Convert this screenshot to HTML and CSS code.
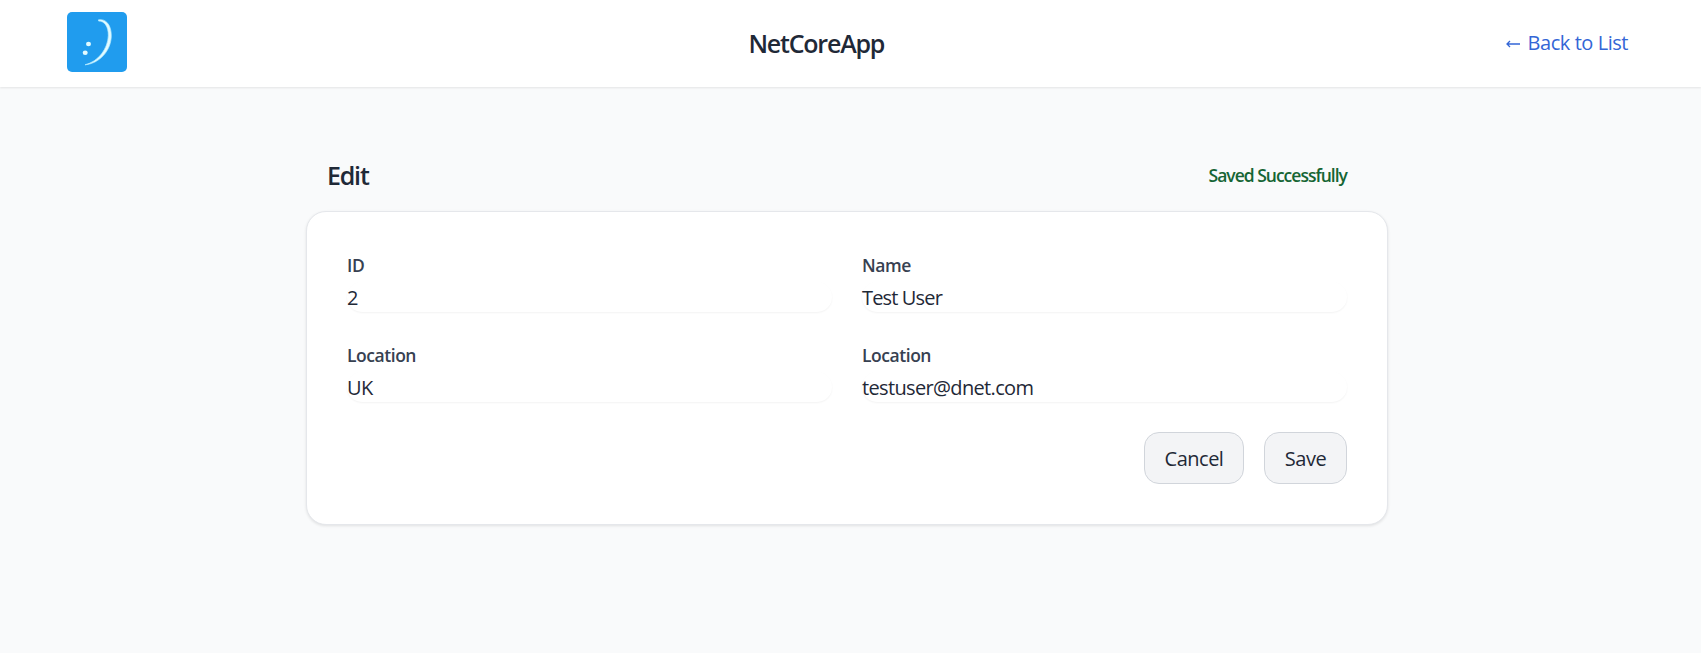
FILE: index.html
```html
<!DOCTYPE html>
<html lang="en">
<head>
<meta charset="utf-8">
<title>NetCoreApp</title>
<link rel="stylesheet" href="styles.css">
</head>
<body>
<header class="topbar">
  <svg class="logo" viewBox="0 0 60 60" role="img" aria-label="Smile">
    <rect width="60" height="60" rx="5" fill="#209cee"/>
    <path d="M31.500 7.800C39 6.500 44.300 13 44.300 23.500C44.300 38 33 51.500 18 52.800C31.500 49.500 41 36.500 41.300 23.500C41.500 14.500 37.500 9 31.500 9Z" fill="#e2fbff" stroke="#b5ebff" stroke-width=".7" stroke-linejoin="round"/>
    <ellipse cx="21.500" cy="32" rx="2.500" ry="2.300" fill="#e2fbff"/>
    <ellipse cx="18.200" cy="40.700" rx="2.500" ry="2.300" fill="#e2fbff"/>
  </svg>
  <h1 class="brand">NetCoreApp</h1>
  <a class="back" href="#"><svg class="arrow" viewBox="0 0 14 10" aria-hidden="true"><path d="M14 5H1M4 2L1 5L4 8"/></svg><span>Back to List</span></a>
</header>
<main class="content">
  <div class="heading">
    <h2 class="title">Edit</h2>
    <p class="status">Saved Successfully</p>
  </div>
  <form class="card">
    <div class="grid">
      <div class="field"><span class="label">ID</span><div class="value">2</div></div>
      <div class="field"><span class="label">Name</span><div class="value value-name">Test User</div></div>
      <div class="field"><span class="label">Location</span><div class="value">UK</div></div>
      <div class="field"><span class="label">Location</span><div class="value">testuser@dnet.com</div></div>
    </div>
    <div class="actions">
      <button class="button cancel" type="button">Cancel</button>
      <button class="button save" type="button">Save</button>
    </div>
  </form>
</main>
</body>
</html>
```
FILE: styles.css
```css
* { box-sizing: border-box; }
body {
  margin: 0;
  min-height: 653px;
  background: #f9fafb;
  color: #1f2937;
  font: 20px/30px "Open Sans", "Noto Sans", sans-serif;
  letter-spacing: -.45px;
}
h1, h2, p { margin: 0; }
.topbar {
  display: flex;
  justify-content: space-between;
  align-items: center;
  height: 87px;
  padding: 0 73px 3px 67px;
  background: #fff;
  box-shadow: 0 1px 2px rgba(0, 0, 0, .09);
}
.logo { width: 60px; height: 60px; display: block; }
.brand {
  font-size: 25px;
  font-weight: 600;
  line-height: 35px;
  letter-spacing: -1.2px;
  padding-top: 3px;
}
.back {
  display: flex;
  align-items: center;
  gap: 8px;
  padding-top: 2px;
  color: #3366d6;
  text-decoration: none;
}
.arrow { width: 14px; height: 10px; fill: none; stroke: currentColor; stroke-width: 1.3; margin-top: 2px; }
.content { width: 1082px; margin: 0 0 0 306px; padding-top: 71px; }
.heading {
  display: flex;
  justify-content: space-between;
  align-items: center;
  height: 53px;
  padding: 0 41px 18px 21px;
}
.title { font-size: 25px; font-weight: 600; line-height: 35px; letter-spacing: -1.2px; }
.status { font-size: 17.5px; font-weight: 600; line-height: 28px; letter-spacing: -1px; padding-bottom: 2px; color: #166534; }
.card {
  height: 314px;
  padding: 40px 40px 0;
  background: #fff;
  border: 1px solid #e5e7eb;
  border-radius: 20px;
  box-shadow: 0 1px 3px rgba(0, 0, 0, .1);
}
.grid { display: grid; grid-template-columns: 1fr 1fr; gap: 30px; }
.label {
  display: block;
  height: 25px;
  margin-bottom: 5px;
  font-size: 17.5px;
  line-height: 27px;
  font-weight: 600;
  color: #374151;
}
.value {
  height: 30px;
  line-height: 31px;
  letter-spacing: -.65px;
  border-radius: 15px;
  box-shadow: 0 1px 2px rgba(0, 0, 0, .05);
}
.value-name { letter-spacing: -.85px; }
.actions { display: flex; justify-content: flex-end; gap: 20px; margin-top: 30px; }
.button {
  height: 52px;
  padding: 2px 0 0;
  border: 1px solid #d1d5db;
  border-radius: 15px;
  background: #f3f4f6;
  color: #1f2937;
  font: inherit;
  letter-spacing: -.5px;
}
.cancel { width: 100px; }
.save { width: 83px; }
```
